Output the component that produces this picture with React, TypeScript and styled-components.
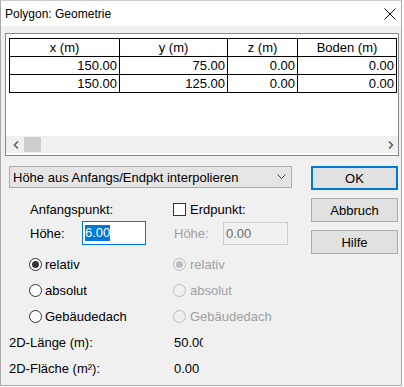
import React from "react";
import styled, {createGlobalStyle} from "styled-components";

const GlobalStyle = createGlobalStyle`
  html, body {
    margin: 0;
    padding: 0;
    background: #ffffff;
  }
  body {
    font-family: "Liberation Sans", Arial, sans-serif;
    font-size: 13px;
    color: #000;
  }
`

const Window = styled.div`
  width: 402px;
  height: 386px;
  box-sizing: border-box;
  border: 1px solid #aaaaaa;
  border-top-color: #cccccc;
  background: #f0f0f0;
  display: flex;
  flex-direction: column;
  overflow: hidden;
`

const TitleBar = styled.div`
  height: 25px;
  flex: none;
  background: #fff;
  display: flex;
  align-items: center;
  justify-content: space-between;
  padding: 0 5px 0 4px;
  font-size: 12px;
`

const Body = styled.div`
  padding: 7px 0 0 4px;
  display: flex;
  flex-direction: column;
`

const ListView = styled.div`
  width: 394px;
  height: 123px;
  box-sizing: border-box;
  border: 1px solid #828790;
  background: #fff;
  display: flex;
  flex-direction: column;
`

const ListContent = styled.div`
  flex: 1;
  padding: 4px 0 0 3px;
  overflow: hidden;
`

const Grid = styled.table`
  border-collapse: collapse;
  table-layout: fixed;
  width: 388px;
  font-size: 13px;
`

const Th = styled.th<{ $w: number }>`
  width: ${p => p.$w}px;
  height: 17px;
  padding: 0;
  border: 1px solid #000;
  font-weight: normal;
  text-align: center;
  line-height: 16px;
`

const Td = styled.td`
  height: 17px;
  padding: 0 2px 0 0;
  border: 1px solid #000;
  text-align: right;
  line-height: 16px;
`

const HScroll = styled.div`
  height: 17px;
  flex: none;
  background: #f0f0f0;
  display: flex;
  align-items: center;
  padding: 0 4px 0 7px;
  margin-bottom: 2px;
`

const Thumb = styled.div`
  width: 17px;
  height: 15px;
  background: #cdcdcd;
  margin-left: 5px;
`

const Spacer = styled.div`
  flex: 1;
`

const Lower = styled.div`
  margin: 10px 0 0 4px;
  display: grid;
  grid-template-columns: 283px 87px;
  column-gap: 19px;
`

const LeftPanel = styled.div`
  display: flex;
  flex-direction: column;
`

const Combo = styled.div`
  height: 22px;
  box-sizing: border-box;
  border: 1px solid #adadad;
  background: #e5e5e5;
  display: flex;
  align-items: center;
  justify-content: space-between;
  padding: 0 5px 0 3px;
  margin-bottom: 9px;
`

const Row = styled.div<{ $h: number; $mt?: number }>`
  display: grid;
  grid-template-columns: 164px 1fr;
  height: ${p => p.$h}px;
  margin-top: ${p => p.$mt || 0}px;
  align-items: center;
`

const Cell = styled.div<{ $indent?: number }>`
  display: flex;
  align-items: center;
  padding-left: ${p => p.$indent || 0}px;
  white-space: nowrap;
`

const Label = styled.span<{ $w?: number; $disabled?: boolean }>`
  display: inline-block;
  width: ${p => (p.$w ? `${p.$w}px` : "auto")};
  color: ${p => (p.$disabled ? "#a0a0a0" : "#000")};
`

const TextBox = styled.div<{ $w: number; $h: number; $active?: boolean }>`
  width: ${p => p.$w}px;
  height: ${p => p.$h}px;
  box-sizing: border-box;
  border: 1px solid ${p => (p.$active ? "#0078d7" : "#cccccc")};
  background: ${p => (p.$active ? "#fff" : "#f0f0f0")};
  color: ${p => (p.$active ? "#000" : "#6d6d6d")};
  display: flex;
  align-items: center;
  padding-left: 2px;
`

const Selection = styled.span`
  background: #0078d7;
  color: #fff;
  line-height: 16px;
`

const Check = styled.span`
  width: 13px;
  height: 13px;
  box-sizing: border-box;
  border: 1px solid #333;
  background: #fff;
  margin-right: 4px;
`

const Radio = styled.span<{ $on?: boolean; $disabled?: boolean }>`
  width: 13px;
  height: 13px;
  box-sizing: border-box;
  border-radius: 50%;
  border: 1px solid ${p => (p.$disabled ? "#bcbcbc" : "#333")};
  background: ${p => (p.$disabled ? "#f0f0f0" : "#fff")};
  display: inline-flex;
  align-items: center;
  justify-content: center;
  margin-right: ${p => (p.$disabled ? 4 : 3)}px;

  &::after {
    content: "";
    display: ${p => (p.$on ? "block" : "none")};
    width: 7px;
    height: 7px;
    border-radius: 50%;
    background: ${p => (p.$disabled ? "#bcbcbc" : "#333")};
  }
`

const Value = styled.span<{ $clip?: number }>`
  display: inline-block;
  overflow: hidden;
  width: ${p => (p.$clip ? `${p.$clip}px` : "auto")};
  padding-left: 1px;
`

const Buttons = styled.div`
  display: flex;
  flex-direction: column;
  gap: 8px;
`

const Button = styled.div<{ $default?: boolean }>`
  height: 24px;
  box-sizing: border-box;
  border: ${p => (p.$default ? "2px solid #0078d7" : "1px solid #adadad")};
  background: #e1e1e1;
  display: flex;
  align-items: center;
  justify-content: center;
`

const cols = [109, 107, 69, 98];
const heads = ["x (m)", "y (m)", "z (m)", "Boden (m)"];
const rows = [
    ["150.00", "75.00", "0.00", "0.00"],
    ["150.00", "125.00", "0.00", "0.00"],
];

const Arrow: React.FC<{ dir: "left" | "right" }> = ({dir}) => (
    <svg width="6" height="8" viewBox="0 0 6 8">
        <path d={dir === "left" ? "M5 0.5 L1.5 4 L5 7.5" : "M1 0.5 L4.5 4 L1 7.5"}
              fill="none" stroke="#606060" strokeWidth="1.6"/>
    </svg>
);

const RadioRow: React.FC<{ label: string; on?: boolean; mt?: number }> = ({label, on, mt}) => (
    <Row $h={26} $mt={mt}>
        <Cell $indent={20}>
            <Radio $on={on}/>
            <span>{label}</span>
        </Cell>
        <Cell>
            <Radio $on={on} $disabled/>
            <Label $disabled>{label}</Label>
        </Cell>
    </Row>
);

const App: React.FC = () => {
    return (
        <Window>
            <GlobalStyle/>
            <TitleBar>
                <span>Polygon: Geometrie</span>
                <svg width="12" height="12" viewBox="0 0 12 12">
                    <path d="M0.5 0.5 L11.5 11.5 M11.5 0.5 L0.5 11.5" stroke="#000" strokeWidth="1"/>
                </svg>
            </TitleBar>
            <Body>
                <ListView>
                    <ListContent>
                        <Grid>
                            <thead>
                            <tr>
                                {heads.map((h, i) => <Th key={h} $w={cols[i]}>{h}</Th>)}
                            </tr>
                            </thead>
                            <tbody>
                            {rows.map((r, i) => (
                                <tr key={i}>
                                    {r.map((c, j) => <Td key={j}>{c}</Td>)}
                                </tr>
                            ))}
                            </tbody>
                        </Grid>
                    </ListContent>
                    <HScroll>
                        <Arrow dir="left"/>
                        <Thumb/>
                        <Spacer/>
                        <Arrow dir="right"/>
                    </HScroll>
                </ListView>

                <Lower>
                    <LeftPanel>
                        <Combo>
                            <span>Höhe aus Anfangs/Endpkt interpolieren</span>
                            <svg width="9" height="6" viewBox="0 0 9 6">
                                <path d="M0.5 0.5 L4.5 4.5 L8.5 0.5" fill="none" stroke="#444" strokeWidth="1"/>
                            </svg>
                        </Combo>

                        <Row $h={24}>
                            <Cell $indent={21}>Anfangspunkt:</Cell>
                            <Cell>
                                <Check/>
                                <span>Erdpunkt:</span>
                            </Cell>
                        </Row>
                        <Row $h={24}>
                            <Cell $indent={21}>
                                <Label $w={52}>Höhe:</Label>
                                <TextBox $w={64} $h={24} $active>
                                    <Selection>6.00</Selection>
                                </TextBox>
                            </Cell>
                            <Cell $indent={1}>
                                <Label $w={49} $disabled>Höhe:</Label>
                                <TextBox $w={65} $h={23}>0.00</TextBox>
                            </Cell>
                        </Row>
                        <RadioRow label="relativ" on mt={6}/>
                        <RadioRow label="absolut"/>
                        <RadioRow label="Gebäudedach"/>
                        <Row $h={26}>
                            <Cell>2D-Länge (m):</Cell>
                            <Cell><Value $clip={29}>50.00</Value></Cell>
                        </Row>
                        <Row $h={26}>
                            <Cell>2D-Fläche (m²):</Cell>
                            <Cell><Value>0.00</Value></Cell>
                        </Row>
                    </LeftPanel>

                    <Buttons>
                        <Button $default>OK</Button>
                        <Button>Abbruch</Button>
                        <Button>Hilfe</Button>
                    </Buttons>
                </Lower>
            </Body>
        </Window>
    );
};

export default App;
